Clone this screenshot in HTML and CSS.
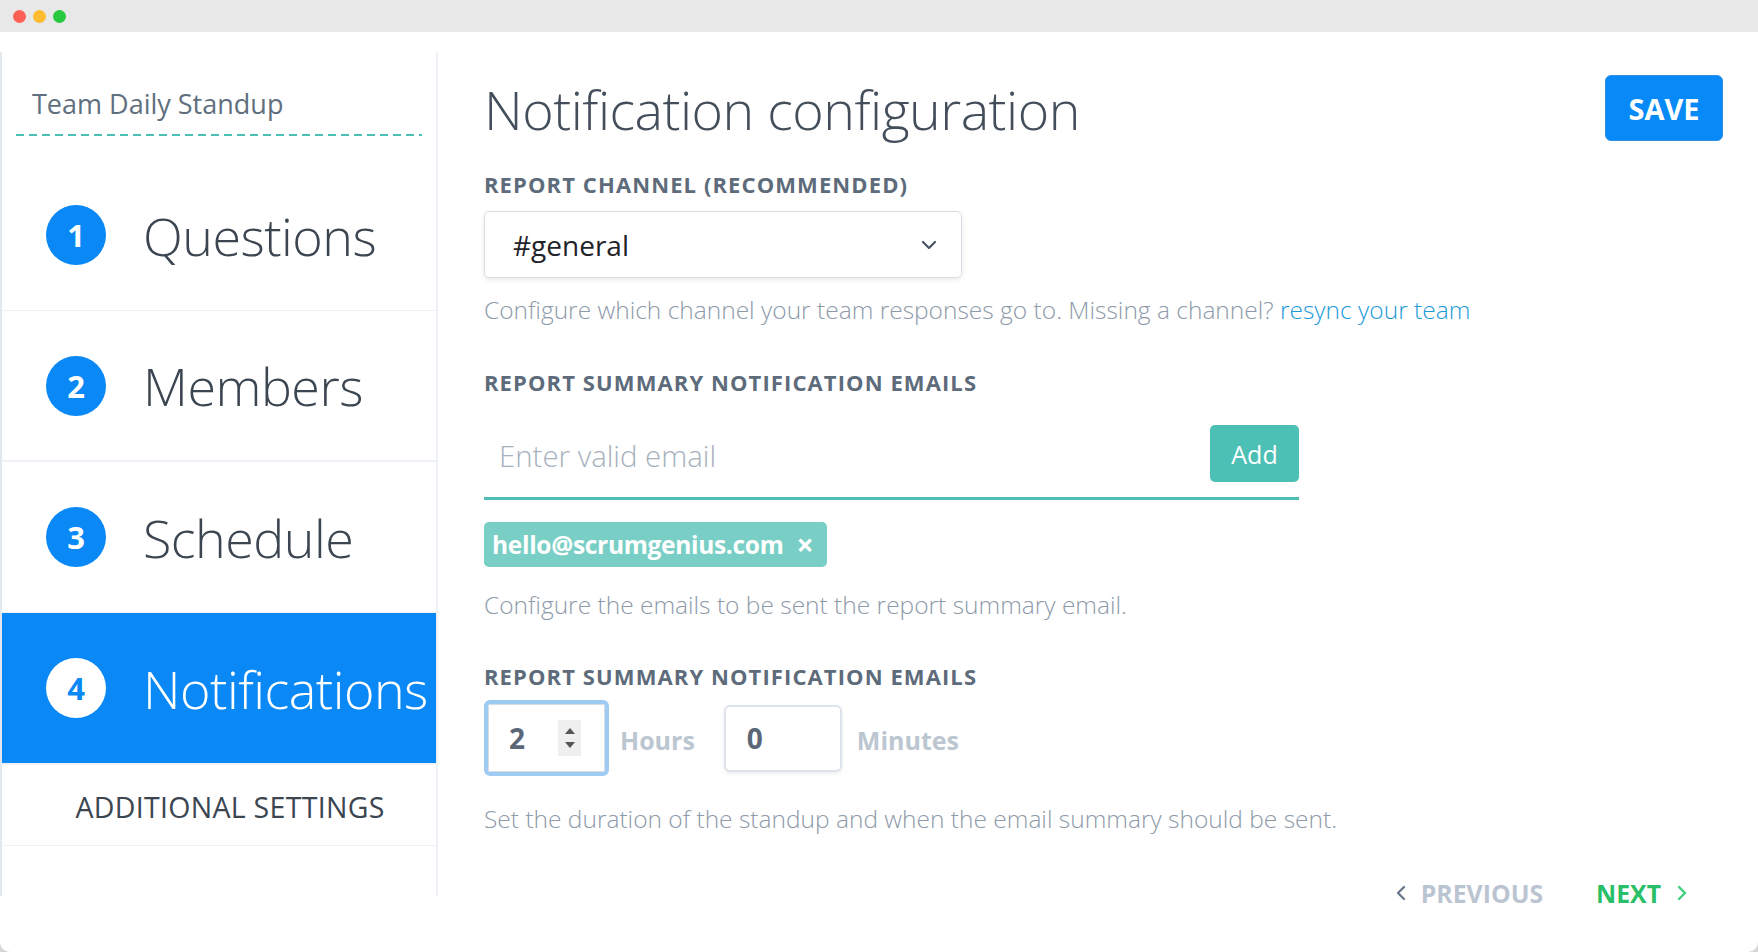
FILE: index.html
```html
<!DOCTYPE html>
<html lang="en">
<head>
<meta charset="utf-8">
<title>Notification configuration</title>
<link rel="stylesheet" href="styles.css">
</head>
<body>
<div class="window">
  <div class="titlebar">
    <span class="dot dot-red"></span>
    <span class="dot dot-yellow"></span>
    <span class="dot dot-green"></span>
  </div>
  <div class="app">
    <aside class="sidebar">
      <div class="sb-head">
        <div class="sb-title">Team Daily Standup</div>
        <div class="sb-dash"></div>
      </div>
      <div class="step">
        <span class="step-num">1</span>
        <span class="step-label">Questions</span>
      </div>
      <div class="step step-thick">
        <span class="step-num">2</span>
        <span class="step-label">Members</span>
      </div>
      <div class="step">
        <span class="step-num">3</span>
        <span class="step-label">Schedule</span>
      </div>
      <div class="step step-active">
        <span class="step-num">4</span>
        <span class="step-label">Notifications</span>
      </div>
      <div class="additional">ADDITIONAL SETTINGS</div>
    </aside>
    <main class="main">
      <div class="main-head">
        <h1 class="title">Notification configuration</h1>
        <button class="save">SAVE</button>
      </div>

      <div class="label label-first">REPORT CHANNEL (RECOMMENDED)</div>
      <div class="select">
        <span class="select-value">#general</span>
        <svg class="chev" width="16" height="10" viewBox="0 0 16 10"><path d="M2 2 L8 8 L14 2" fill="none" stroke="#4a5563" stroke-width="2.2" stroke-linecap="round" stroke-linejoin="round"/></svg>
      </div>
      <p class="help">Configure which channel your team responses go to. Missing a channel? <a class="link">resync your team</a></p>

      <div class="label">REPORT SUMMARY NOTIFICATION EMAILS</div>
      <div class="email-row">
        <span class="placeholder">Enter valid email</span>
        <button class="add">Add</button>
      </div>
      <div class="tags">
        <span class="tag">hello@scrumgenius.com <span class="tag-x">×</span></span>
      </div>
      <p class="help help-2">Configure the emails to be sent the report summary email.</p>

      <div class="label label-3">REPORT SUMMARY NOTIFICATION EMAILS</div>
      <div class="time-row">
        <div class="num num-focus">
          <span class="num-val">2</span>
          <span class="spin">
            <svg width="12" height="8" viewBox="0 0 12 8"><path d="M6 1 L11 7 L1 7 Z" fill="#555"/></svg>
            <svg width="12" height="8" viewBox="0 0 12 8"><path d="M1 1 L11 1 L6 7 Z" fill="#555"/></svg>
          </span>
        </div>
        <span class="unit">Hours</span>
        <div class="num num-plain">
          <span class="num-val">0</span>
        </div>
        <span class="unit">Minutes</span>
      </div>
      <p class="help help-3">Set the duration of the standup and when the email summary should be sent.</p>

      <div class="pager">
        <span class="prev">
          <svg width="10" height="16" viewBox="0 0 10 16"><path d="M8 2 L2 8 L8 14" fill="none" stroke="#6b7a8b" stroke-width="2.4" stroke-linecap="round" stroke-linejoin="round"/></svg>
          PREVIOUS
        </span>
        <span class="next">
          NEXT
          <svg width="10" height="16" viewBox="0 0 10 16"><path d="M2 2 L8 8 L2 14" fill="none" stroke="#3fd07f" stroke-width="2.4" stroke-linecap="round" stroke-linejoin="round"/></svg>
        </span>
      </div>
    </main>
  </div>
</div>
</body>
</html>
```

FILE: styles.css
```css
* { box-sizing: border-box; }
html, body {
  margin: 0;
  padding: 0;
  width: 1758px;
  height: 952px;
  overflow: hidden;
  background: #d6d6d6;
  font-family: "Open Sans", "Noto Sans", sans-serif;
}
.window {
  width: 1758px;
  height: 952px;
  background: #ffffff;
  border-radius: 0 0 10px 10px;
  overflow: hidden;
  display: flex;
  flex-direction: column;
}
.titlebar {
  height: 32px;
  flex: none;
  background: #e8e8e8;
  display: flex;
  align-items: center;
  padding-left: 13px;
  gap: 7px;
}
.dot {
  width: 13px;
  height: 13px;
  border-radius: 50%;
  display: inline-block;
}
.dot-red { background: #fe5f57; }
.dot-yellow { background: #febc2e; }
.dot-green { background: #28c840; }

.app {
  flex: 1;
  display: flex;
  align-items: flex-start;
}

/* Sidebar */
.sidebar {
  width: 438px;
  flex: none;
  margin-top: 20px;
  border-right: 2px solid #eef1f5;
  border-left: 2px solid #e3e8ee;
  padding-bottom: 50px;
}
.sb-head {
  height: 108px;
  padding: 34px 0 0 14px;
}
.sb-title {
  font-size: 27px;
  font-weight: 400;
  color: #606f7e;
  line-height: 36px;
  padding-left: 16px;
}
.sb-dash {
  margin-top: 12px;
  width: 406px;
  height: 2px;
  background-image: linear-gradient(to right, #4cc0b4 0 8px, transparent 8px 13px);
  background-size: 13px 2px;
}
.step {
  height: 151px;
  display: flex;
  align-items: center;
  padding-left: 44px;
  border-bottom: 1px solid #eff2f5;
  background: #ffffff;
}
.step-thick { border-bottom: 2px solid #eef1f5; }
.step-num {
  width: 60px;
  height: 60px;
  border-radius: 50%;
  background: #0a88f5;
  color: #ffffff;
  font-weight: 700;
  font-size: 31px;
  display: flex;
  align-items: center;
  justify-content: center;
  flex: none;
}
.step-label {
  margin-left: 37px;
  font-size: 52px;
  font-weight: 300;
  color: #3c4651;
  white-space: nowrap;
  letter-spacing: -0.5px;
}
.step-active {
  background: #0a89f6;
  height: 152px;
  border-bottom: 2px solid #eef1f5;
}
.step-active .step-num {
  background: #ffffff;
  color: #0a89f6;
}
.step-active .step-label { color: #ffffff; }
.additional {
  height: 81px;
  display: flex;
  align-items: center;
  justify-content: center;
  padding-left: 22px;
  padding-top: 4px;
  font-size: 28.5px;
  color: #3c4651;
  letter-spacing: 0.3px;
  border-bottom: 1px solid #eff2f5;
}

/* Main */
.main {
  flex: 1;
  padding: 30px 35px 0 46px;
  display: flex;
  flex-direction: column;
  align-items: flex-start;
}
.main-head {
  width: 100%;
  display: flex;
  justify-content: space-between;
  align-items: flex-start;
}
.title {
  margin: 12px 0 0 0;
  font-size: 53.7px;
  font-weight: 300;
  color: #434e5a;
  line-height: 72px;
  letter-spacing: -0.5px;
}
.save {
  margin-top: 13px;
  width: 118px;
  height: 66px;
  border: 1px solid #2f8fe0;
  border-radius: 6px;
  background: #078af7;
  color: #ffffff;
  font-family: inherit;
  font-size: 29px;
  font-weight: 700;
  padding: 0;
}
.label {
  font-size: 22px;
  font-weight: 700;
  color: #5d6b7b;
  letter-spacing: 1.1px;
  line-height: 28px;
}
.label-first { margin-top: 24px; }
.select {
  margin-top: 13px;
  width: 478px;
  height: 67px;
  border: 1px solid #d8dee5;
  border-radius: 5px;
  box-shadow: 0 2px 5px rgba(0,0,0,0.09);
  display: flex;
  align-items: center;
  justify-content: space-between;
  padding: 0 24px 0 28px;
}
.select-value {
  font-size: 28px;
  color: #1f2328;
}
.help {
  margin: 15px 0 0 0;
  font-size: 24.5px;
  font-weight: 300;
  color: #8d9aa9;
  line-height: 34px;
}
.link { color: #1c9ad8; }
.help + .label { margin-top: 41px; }
.email-row {
  margin-top: 29px;
  width: 815px;
  height: 75px;
  border-bottom: 3px solid #4cc0b4;
  display: flex;
  align-items: flex-start;
  justify-content: space-between;
}
.placeholder {
  margin-top: 11px;
  margin-left: 15px;
  font-size: 29.4px;
  font-weight: 300;
  color: #a6b1bd;
}
.add {
  width: 89px;
  height: 57px;
  border: none;
  border-radius: 5px;
  background: #4cc0b4;
  color: #ffffff;
  font-family: inherit;
  font-size: 25px;
  padding: 0;
}
.tags { margin-top: 22px; }
.tag {
  display: inline-flex;
  align-items: center;
  height: 45px;
  padding: 0 14px 0 8px;
  border-radius: 5px;
  background: #79cfc5;
  color: #ffffff;
  font-size: 24.5px;
  font-weight: 700;
  letter-spacing: -0.3px;
}
.tag-x {
  margin-left: 13px;
  font-size: 30px;
  font-weight: 700;
}
.help-2 { margin-top: 21px; }
.help-2 + .label-3 { margin-top: 40px; }
.time-row {
  margin-top: 10px;
  display: flex;
  align-items: center;
}
.num {
  display: flex;
  align-items: center;
  justify-content: space-between;
  background: #ffffff;
  border-radius: 6px;
}
.num-focus {
  width: 125px;
  height: 76px;
  border: 4px solid #9ecbf1;
  padding: 0 24px 0 21px;
  box-shadow: inset 0 0 0 1px #d5dde5;
}
.num-plain {
  width: 118px;
  height: 67px;
  border: 2px solid #dde3ea;
  box-shadow: 0 2px 4px rgba(0,0,0,0.07);
  padding-left: 21px;
}
.num-val {
  font-size: 28px;
  font-weight: 700;
  color: #5a6777;
}
.spin {
  width: 23px;
  height: 36px;
  background: #efefef;
  display: flex;
  flex-direction: column;
  align-items: center;
  justify-content: center;
  gap: 6px;
}
.spin svg { display: block; }
.unit {
  margin: 4px 29px 0 11px;
  font-size: 25px;
  font-weight: 700;
  color: #bcc6d1;
}
.num-plain + .unit { margin-left: 15px; }
.help-3 { margin-top: 26px; }
.pager {
  align-self: flex-end;
  margin-top: 40px;
  margin-right: 36px;
  display: flex;
  align-items: center;
  gap: 53px;
  font-size: 24.8px;
  font-weight: 700;
}
.prev {
  color: #bac5d1;
  display: flex;
  align-items: center;
  gap: 15px;
}
.next {
  color: #29bf68;
  display: flex;
  align-items: center;
  gap: 16px;
}
```
